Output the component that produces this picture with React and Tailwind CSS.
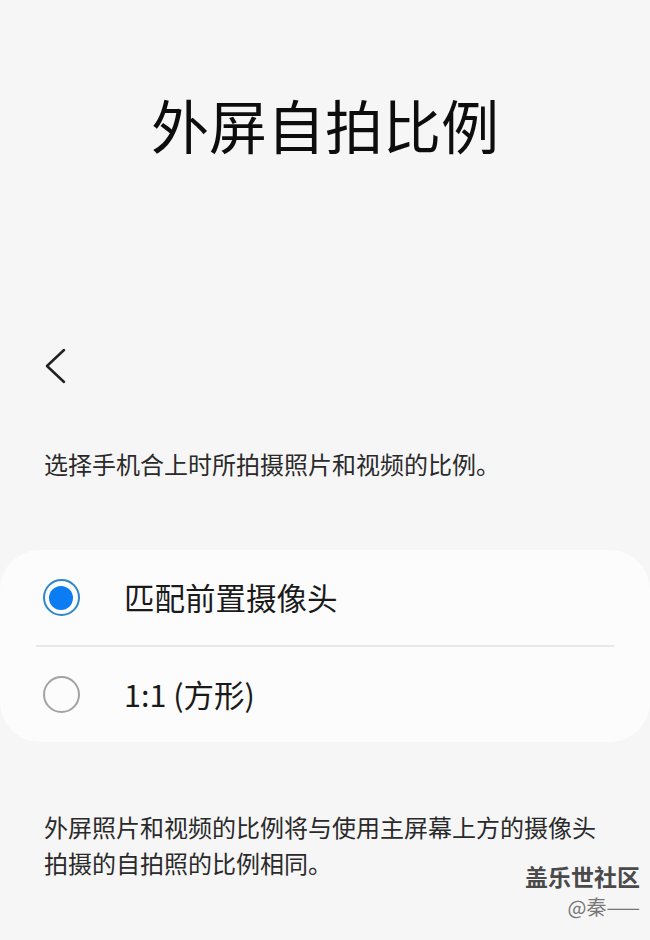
import React, { useState } from 'react';

const font = { fontFamily: '"Noto Sans CJK SC", "Noto Sans", sans-serif' };

const Radio = ({ checked }) => (
  <div className="w-[40px] flex justify-center">
    {checked ? (
      <div className="w-[37px] h-[37px] rounded-full border-[2px] border-[#2f86c8] flex items-center justify-center">
        <div className="w-[24px] h-[24px] rounded-full bg-[#0b7cf2]" />
      </div>
    ) : (
      <div className="w-[37px] h-[37px] rounded-full border-[2px] border-[#a3a3a3]" />
    )}
  </div>
);

export default function App() {
  const [selected, setSelected] = useState(0);
  const options = ['匹配前置摄像头', '1:1 (方形)'];

  return (
    <div className="min-h-screen w-[650px] bg-[#f6f6f6] text-[#111]" style={font}>
      {/* Title */}
      <h1 className="pt-[84px] text-center text-[58px] leading-[80px] text-[#0d0d0d]">外屏自拍比例</h1>

      {/* Back */}
      <div className="pl-[45px] pt-[184px]">
        <svg width="22" height="36" viewBox="0 0 22 36" fill="none">
          <path d="M19 2 L2 18 L19 34" stroke="#222" strokeWidth="2.5" strokeLinecap="round" strokeLinejoin="round" />
        </svg>
      </div>

      {/* Description */}
      <p className="pl-[44px] pt-[64px] text-[24px] leading-[32px] text-[#2a2a2a]">
        选择手机合上时所拍摄照片和视频的比例。
      </p>

      {/* Options card */}
      <div className="mt-[70px] bg-[#fcfcfc] rounded-[40px]">
        {options.map((opt, i) => (
          <div key={opt}>
            {i > 0 && <div className="mx-[36px] h-[2px] bg-[#e8e8e8]" />}
            <button
              type="button"
              onClick={() => setSelected(i)}
              className="w-full h-[95px] flex items-center pl-[41px] text-left"
            >
              <Radio checked={selected === i} />
              <span className="ml-[43px] text-[30.5px] text-[#1a1a1a]">{opt}</span>
            </button>
          </div>
        ))}
      </div>

      {/* Footnote */}
      <p className="pl-[44px] pr-[24px] pt-[67px] text-[24px] leading-[36px] text-[#2a2a2a]">
        外屏照片和视频的比例将与使用主屏幕上方的摄像头
        <br />
        拍摄的自拍照的比例相同。
      </p>

      {/* Watermark */}
      <div className="flex flex-col items-end pr-[10px] -mt-[19px] pb-[20px]">
        <span className="text-[23px] leading-[28px] text-[#4a4a4a] font-semibold">盖乐世社区</span>
        <span className="mt-[5px] text-[20px] leading-[24px] text-[#777]">@秦——</span>
      </div>
    </div>
  );
}
